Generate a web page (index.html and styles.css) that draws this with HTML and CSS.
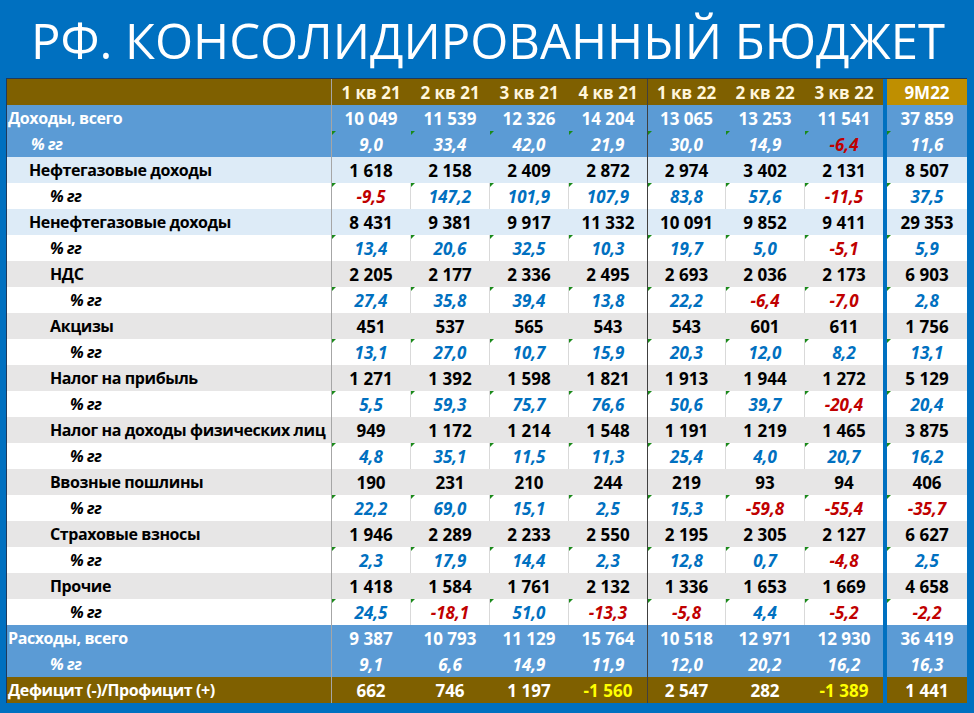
FILE: index.html
```html
<!DOCTYPE html>
<html lang="ru">
<head>
<meta charset="utf-8">
<title>РФ. Консолидированный бюджет</title>
<link rel="stylesheet" href="styles.css">
</head>
<body>
<div class="title">РФ. КОНСОЛИДИРОВАННЫЙ БЮДЖЕТ</div>
<div class="sheet">
  <div class="row r-hdr">
    <div class="lbl"></div><div>1 кв 21</div><div>2 кв 21</div><div>3 кв 21</div><div>4 кв 21</div><div>1 кв 22</div><div>2 кв 22</div><div>3 кв 22</div><div class="tot">9M22</div>
  </div>
  <div class="row r-blue">
    <div class="lbl i0">Доходы, всего</div><div>10&nbsp;049</div><div>11&nbsp;539</div><div>12&nbsp;326</div><div>14&nbsp;204</div><div>13&nbsp;065</div><div>13&nbsp;253</div><div>11&nbsp;541</div><div>37&nbsp;859</div>
  </div>
  <div class="row r-blue pct tk">
    <div class="lbl i1">% гг</div><div>9,0</div><div>33,4</div><div>42,0</div><div>21,9</div><div>30,0</div><div>14,9</div><div class="n">-6,4</div><div>11,6</div>
  </div>
  <div class="row r-lb">
    <div class="lbl i2">Нефтегазовые доходы</div><div>1&nbsp;618</div><div>2&nbsp;158</div><div>2&nbsp;409</div><div>2&nbsp;872</div><div>2&nbsp;974</div><div>3&nbsp;402</div><div>2&nbsp;131</div><div>8&nbsp;507</div>
  </div>
  <div class="row r-white pct tk">
    <div class="lbl i3">% гг</div><div class="n">-9,5</div><div>147,2</div><div>101,9</div><div>107,9</div><div>83,8</div><div>57,6</div><div class="n">-11,5</div><div>37,5</div>
  </div>
  <div class="row r-lb">
    <div class="lbl i2">Ненефтегазовые доходы</div><div>8&nbsp;431</div><div>9&nbsp;381</div><div>9&nbsp;917</div><div>11&nbsp;332</div><div>10&nbsp;091</div><div>9&nbsp;852</div><div>9&nbsp;411</div><div>29&nbsp;353</div>
  </div>
  <div class="row r-white pct tk">
    <div class="lbl i3">% гг</div><div>13,4</div><div>20,6</div><div>32,5</div><div>10,3</div><div>19,7</div><div>5,0</div><div class="n">-5,1</div><div>5,9</div>
  </div>
  <div class="row r-gray">
    <div class="lbl i3">НДС</div><div>2&nbsp;205</div><div>2&nbsp;177</div><div>2&nbsp;336</div><div>2&nbsp;495</div><div>2&nbsp;693</div><div>2&nbsp;036</div><div>2&nbsp;173</div><div>6&nbsp;903</div>
  </div>
  <div class="row r-white pct tk">
    <div class="lbl i4">% гг</div><div>27,4</div><div>35,8</div><div>39,4</div><div>13,8</div><div>22,2</div><div class="n">-6,4</div><div class="n">-7,0</div><div>2,8</div>
  </div>
  <div class="row r-gray">
    <div class="lbl i3">Акцизы</div><div>451</div><div>537</div><div>565</div><div>543</div><div>543</div><div>601</div><div>611</div><div>1&nbsp;756</div>
  </div>
  <div class="row r-white pct tk">
    <div class="lbl i4">% гг</div><div>13,1</div><div>27,0</div><div>10,7</div><div>15,9</div><div>20,3</div><div>12,0</div><div>8,2</div><div>13,1</div>
  </div>
  <div class="row r-gray">
    <div class="lbl i3">Налог на прибыль</div><div>1&nbsp;271</div><div>1&nbsp;392</div><div>1&nbsp;598</div><div>1&nbsp;821</div><div>1&nbsp;913</div><div>1&nbsp;944</div><div>1&nbsp;272</div><div>5&nbsp;129</div>
  </div>
  <div class="row r-white pct tk">
    <div class="lbl i4">% гг</div><div>5,5</div><div>59,3</div><div>75,7</div><div>76,6</div><div>50,6</div><div>39,7</div><div class="n">-20,4</div><div>20,4</div>
  </div>
  <div class="row r-gray">
    <div class="lbl i3">Налог на доходы физических лиц</div><div>949</div><div>1&nbsp;172</div><div>1&nbsp;214</div><div>1&nbsp;548</div><div>1&nbsp;191</div><div>1&nbsp;219</div><div>1&nbsp;465</div><div>3&nbsp;875</div>
  </div>
  <div class="row r-white pct tk">
    <div class="lbl i4">% гг</div><div>4,8</div><div>35,1</div><div>11,5</div><div>11,3</div><div>25,4</div><div>4,0</div><div>20,7</div><div>16,2</div>
  </div>
  <div class="row r-gray">
    <div class="lbl i3">Ввозные пошлины</div><div>190</div><div>231</div><div>210</div><div>244</div><div>219</div><div>93</div><div>94</div><div>406</div>
  </div>
  <div class="row r-white pct tk">
    <div class="lbl i4">% гг</div><div>22,2</div><div>69,0</div><div>15,1</div><div>2,5</div><div>15,3</div><div class="n">-59,8</div><div class="n">-55,4</div><div class="n">-35,7</div>
  </div>
  <div class="row r-gray">
    <div class="lbl i3">Страховые взносы</div><div>1&nbsp;946</div><div>2&nbsp;289</div><div>2&nbsp;233</div><div>2&nbsp;550</div><div>2&nbsp;195</div><div>2&nbsp;305</div><div>2&nbsp;127</div><div>6&nbsp;627</div>
  </div>
  <div class="row r-white pct tk">
    <div class="lbl i4">% гг</div><div>2,3</div><div>17,9</div><div>14,4</div><div>2,3</div><div>12,8</div><div>0,7</div><div class="n">-4,8</div><div>2,5</div>
  </div>
  <div class="row r-gray">
    <div class="lbl i3">Прочие</div><div>1&nbsp;418</div><div>1&nbsp;584</div><div>1&nbsp;761</div><div>2&nbsp;132</div><div>1&nbsp;336</div><div>1&nbsp;653</div><div>1&nbsp;669</div><div>4&nbsp;658</div>
  </div>
  <div class="row r-white pct tk">
    <div class="lbl i4">% гг</div><div>24,5</div><div class="n">-18,1</div><div>51,0</div><div class="n">-13,3</div><div class="n">-5,8</div><div>4,4</div><div class="n">-5,2</div><div class="n">-2,2</div>
  </div>
  <div class="row r-blue">
    <div class="lbl i0">Расходы, всего</div><div>9&nbsp;387</div><div>10&nbsp;793</div><div>11&nbsp;129</div><div>15&nbsp;764</div><div>10&nbsp;518</div><div>12&nbsp;971</div><div>12&nbsp;930</div><div>36&nbsp;419</div>
  </div>
  <div class="row r-blue pct">
    <div class="lbl i3">% гг</div><div>9,1</div><div>6,6</div><div>14,9</div><div>11,9</div><div>12,0</div><div>20,2</div><div>16,2</div><div>16,3</div>
  </div>
  <div class="row r-def">
    <div class="lbl i0">Дефицит (-)/Профицит (+)</div><div>662</div><div>746</div><div>1&nbsp;197</div><div class="y">-1&nbsp;560</div><div>2&nbsp;547</div><div>282</div><div class="y">-1&nbsp;389</div><div>1&nbsp;441</div>
  </div>
</div>
</body>
</html>
```
FILE: styles.css
```css
* { box-sizing: border-box; }

html, body {
  margin: 0;
  background: #0070c0;
}

body {
  width: 974px;
  height: 713px;
  overflow: hidden;
  font-family: "Open Sans", "Noto Sans", sans-serif;
}

.title {
  height: 78px;
  padding-left: 31px;
  color: #ffffff;
  font-size: 49px;
  line-height: 80px;
  white-space: nowrap;
}

.sheet {
  margin-left: 6px;
  width: 961px;
  border-left: 1px solid #1f3a5c;
  border-top: 1px solid #1f3a5c;
}

.row {
  display: grid;
  grid-template-columns: 324px 79px 79px 79px 79px 78px 79px 79px 84px;
  height: 26px;
  font-size: 17px;
  font-weight: 700;
  color: #000000;
}

.row > div {
  position: relative;
  display: flex;
  align-items: center;
  justify-content: center;
  border-left: 1px solid transparent;
  white-space: nowrap;
}

.r-white > div { border-left-color: #d9d9d9; }

.row > div:nth-child(2) { border-left-color: #a6a6a6; }
.row > div:nth-child(6) { border-left-color: #404040; }
.row > div:nth-child(9) { border-left: 4px solid #0070c0; }

.row > .lbl {
  justify-content: flex-start;
  border-left: 0;
  font-size: 16px;
  letter-spacing: -0.4px;
}

.i0 { padding-left: 1px; }
.i1 { padding-left: 24px; }
.i2 { padding-left: 22px; }
.i3 { padding-left: 43px; }
.i4 { padding-left: 63px; }

.pct > div { font-style: italic; }

.r-hdr { background: #7f6000; color: #fff6dc; }
.r-hdr > .tot { background: #bf8f00; color: #ffffff; }

.r-blue { background: #5b9bd5; color: #ffffff; }
.r-lb { background: #ddebf7; }
.r-gray { background: #e7e6e6; }
.r-white { background: #ffffff; color: #0070c0; }
.r-white > .lbl { color: #000000; }
.r-def { background: #7f6000; color: #ffffff; }

.row > .n { color: #c00000; }
.row > .y { color: #ffff00; }

.tk > div:not(.lbl)::before {
  content: "";
  position: absolute;
  top: 0;
  left: 0;
  border-top: 4px solid #1a8a1a;
  border-right: 4px solid transparent;
}
```
